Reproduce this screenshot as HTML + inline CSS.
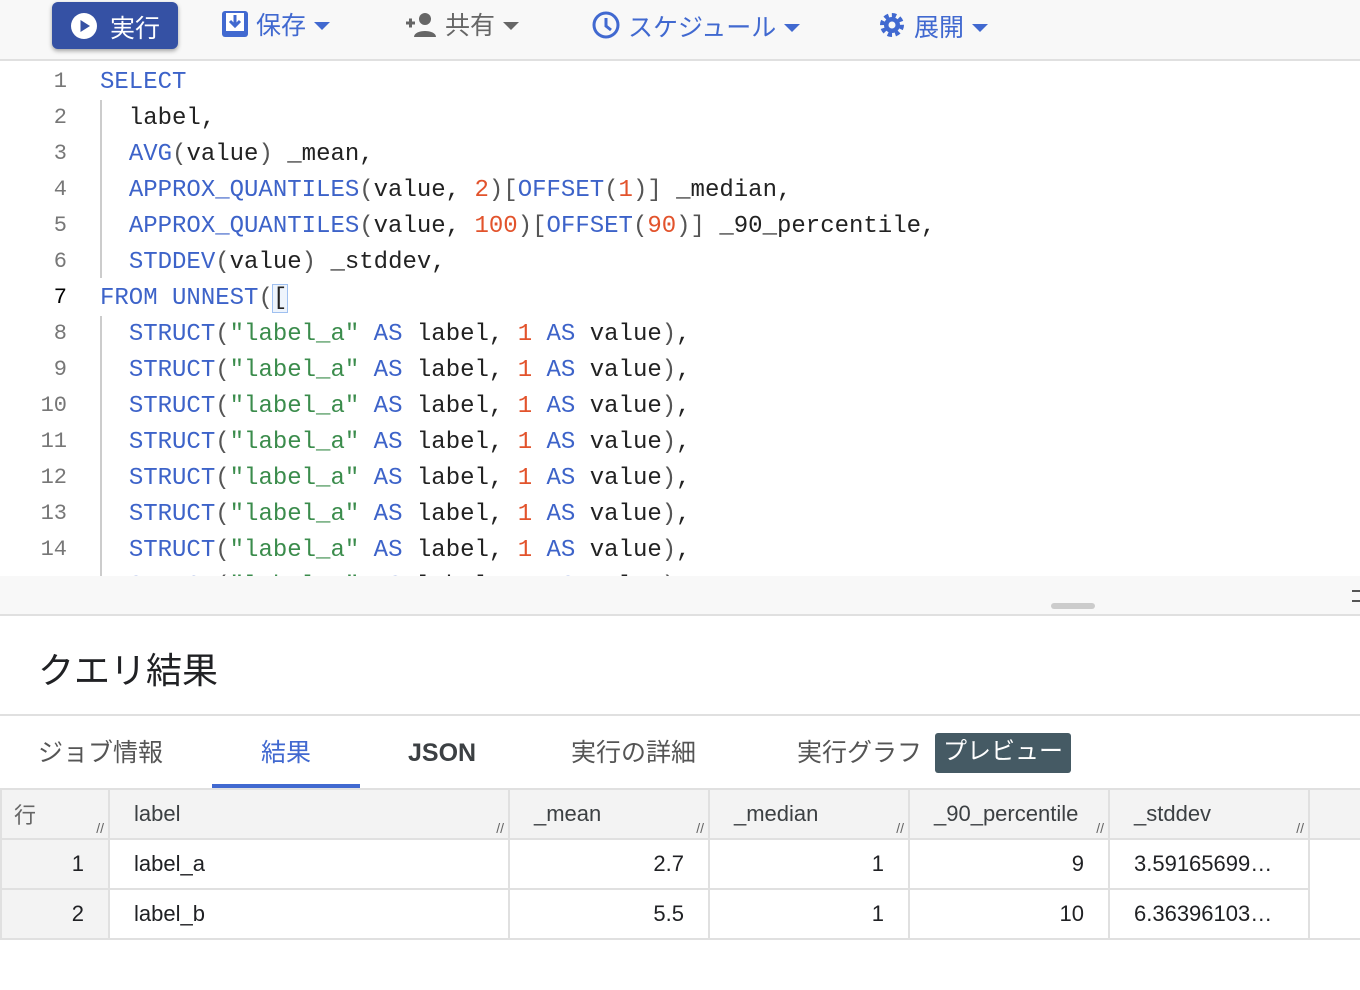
<!DOCTYPE html>
<html><head><meta charset="utf-8"><style>
*{margin:0;padding:0;box-sizing:border-box}
body{width:1360px;height:990px;overflow:hidden;background:#fff;font-family:"Liberation Sans","Noto Sans CJK JP",sans-serif;position:relative}
.tb{position:absolute;left:0;top:0;width:1360px;height:61px;background:#f8f8f8;border-bottom:2px solid #e0e0e0}
.run{position:absolute;left:52px;top:2px;width:126px;height:47px;background:#3551a4;border-radius:6px;box-shadow:0 2px 4px rgba(0,0,0,.35);color:#fff;font-size:25px}
.ti{position:absolute;top:10px;font-size:25px;color:#4169d0;line-height:32px;white-space:nowrap}
.tri{display:inline-block;width:0;height:0;border-left:8px solid transparent;border-right:8px solid transparent;border-top:8px solid currentColor;vertical-align:4px;margin-left:8px}
.ed{position:absolute;left:0;top:62px;width:1360px;height:514px;overflow:hidden;background:#fff}
.ln{position:absolute;left:0;width:67px;text-align:right;font-family:"Liberation Mono",monospace;font-size:22px;color:#777;line-height:36px}
.cd{position:absolute;left:100px;font-family:"Liberation Mono",monospace;font-size:24px;line-height:36px;white-space:pre;color:#222}
.k{color:#3d63c9}.n{color:#e2532c}.s{color:#3b8c4c}.p{color:#555}
.bar{position:absolute;left:0;top:576px;width:1360px;height:40px;background:#f8f8f8;border-bottom:2px solid #e0e0e0}
.title{position:absolute;left:38px;top:642px;font-size:36px;color:#202124}
.tabs{position:absolute;left:0;top:714px;width:1360px;height:76px;border-top:2px solid #e0e0e0;border-bottom:2px solid #e0e0e0}
.tab{position:absolute;top:20px;font-size:25px;color:#555;white-space:nowrap;line-height:34px}
table{position:absolute;left:0;top:788px;border-collapse:collapse;font-size:22px;color:#202124;table-layout:fixed;width:1360px}
td{height:50px;border:2px solid #e0e0e0;padding:0 24px;position:relative;white-space:nowrap;overflow:hidden}
tr.h td{background:#f3f3f3;color:#3c4043;height:50px}
td.r{background:#f3f3f3;text-align:right}
td.num{text-align:right}
.gr{position:absolute;right:4px;bottom:2px;font-size:14px;color:#666}
</style></head><body>
<div class="tb">
 <div class="run"><svg style="position:absolute;left:18px;top:10px" width="28" height="28" viewBox="0 0 28 28"><circle cx="14" cy="14" r="13" fill="#fff"/><path d="M10.5 8 L20 14 L10.5 20Z" fill="#3551a4"/></svg><span style="position:absolute;left:58px;top:7px">実行</span></div>
 <div class="ti" style="left:221px"><svg style="vertical-align:-4px" width="28" height="28" viewBox="0 0 28 28"><rect x="1" y="1" width="26" height="26" rx="3" fill="#4169d0"/><rect x="5" y="3" width="18" height="18" fill="#fff"/><path d="M14 5v10M9 11l5 5 5-5" stroke="#4169d0" stroke-width="3" fill="none"/></svg> 保存<span class="tri"></span></div>
 <div class="ti" style="left:404px;color:#666"><svg style="vertical-align:-4px" width="34" height="28" viewBox="0 0 34 28"><path d="M2 13h9M6.5 8.5v9" stroke="#666" stroke-width="3"/><circle cx="21" cy="9" r="6" fill="#666"/><path d="M10 27c0-8 22-8 22 0z" fill="#666"/></svg> 共有<span class="tri"></span></div>
 <div class="ti" style="left:591px"><svg style="vertical-align:-4px" width="30" height="30" viewBox="0 0 30 30"><circle cx="15" cy="15" r="12" stroke="#4169d0" stroke-width="3" fill="none"/><path d="M15 8v8l5 4" stroke="#4169d0" stroke-width="3" fill="none"/></svg> スケジュール<span class="tri"></span></div>
 <div class="ti" style="left:877px"><svg style="vertical-align:-4px" width="30" height="30" viewBox="0 0 30 30"><circle cx="15" cy="15" r="9" fill="none" stroke="#4169d0" stroke-width="6" stroke-dasharray="4 3"/><circle cx="15" cy="15" r="8" fill="#4169d0"/><circle cx="15" cy="15" r="3.5" fill="#f8f8f8"/></svg> 展開<span class="tri"></span></div>
</div>
<div class="ed">
 <div style="position:absolute;left:100px;top:38px;width:2px;height:178px;background:#ccc"></div>
 <div style="position:absolute;left:100px;top:254px;width:2px;height:270px;background:#ccc"></div>
 <div class="ln" style="top:2px">1<br>2<br>3<br>4<br>5<br>6<br><span style="color:#000">7</span><br>8<br>9<br>10<br>11<br>12<br>13<br>14<br>15</div>
 <div class="cd" style="top:3px"><span class="k">SELECT</span>
  label,
  <span class="k">AVG</span><span class="p">(</span>value<span class="p">)</span> _mean,
  <span class="k">APPROX_QUANTILES</span><span class="p">(</span>value, <span class="n">2</span><span class="p">)[</span><span class="k">OFFSET</span><span class="p">(</span><span class="n">1</span><span class="p">)]</span> _median,
  <span class="k">APPROX_QUANTILES</span><span class="p">(</span>value, <span class="n">100</span><span class="p">)[</span><span class="k">OFFSET</span><span class="p">(</span><span class="n">90</span><span class="p">)]</span> _90_percentile,
  <span class="k">STDDEV</span><span class="p">(</span>value<span class="p">)</span> _stddev,
<span class="k">FROM UNNEST</span><span class="p">(</span><span style="outline:1px solid #9fc0f0;background:#eef4fc">[</span>
  <span class="k">STRUCT</span><span class="p">(</span><span class="s">"label_a"</span> <span class="k">AS</span> label, <span class="n">1</span> <span class="k">AS</span> value<span class="p">)</span>,
  <span class="k">STRUCT</span><span class="p">(</span><span class="s">"label_a"</span> <span class="k">AS</span> label, <span class="n">1</span> <span class="k">AS</span> value<span class="p">)</span>,
  <span class="k">STRUCT</span><span class="p">(</span><span class="s">"label_a"</span> <span class="k">AS</span> label, <span class="n">1</span> <span class="k">AS</span> value<span class="p">)</span>,
  <span class="k">STRUCT</span><span class="p">(</span><span class="s">"label_a"</span> <span class="k">AS</span> label, <span class="n">1</span> <span class="k">AS</span> value<span class="p">)</span>,
  <span class="k">STRUCT</span><span class="p">(</span><span class="s">"label_a"</span> <span class="k">AS</span> label, <span class="n">1</span> <span class="k">AS</span> value<span class="p">)</span>,
  <span class="k">STRUCT</span><span class="p">(</span><span class="s">"label_a"</span> <span class="k">AS</span> label, <span class="n">1</span> <span class="k">AS</span> value<span class="p">)</span>,
  <span class="k">STRUCT</span><span class="p">(</span><span class="s">"label_a"</span> <span class="k">AS</span> label, <span class="n">1</span> <span class="k">AS</span> value<span class="p">)</span>,
  <span class="k">STRUCT</span><span class="p">(</span><span class="s">"label_a"</span> <span class="k">AS</span> label, <span class="n">1</span> <span class="k">AS</span> value<span class="p">)</span>,</div>
</div>
<div class="bar"><div style="position:absolute;left:1051px;top:27px;width:44px;height:6px;border-radius:3px;background:#ccc"></div><div style="position:absolute;left:1352px;top:14px;width:8px;height:2px;background:#555"></div><div style="position:absolute;left:1352px;top:24px;width:8px;height:2px;background:#555"></div></div>
<div class="title">クエリ結果</div>
<div class="tabs">
 <div class="tab" style="left:38px">ジョブ情報</div>
 <div class="tab" style="left:261px;color:#4169d0">結果</div>
 <div class="tab" style="left:408px;color:#3c4043;font-weight:bold">JSON</div>
 <div class="tab" style="left:571px">実行の詳細</div>
 <div class="tab" style="left:797px">実行グラフ</div>
 <div style="position:absolute;left:935px;top:17px;width:136px;height:40px;background:#455a64;border-radius:3px;color:#fff;font-size:24px;text-align:center;line-height:38px">プレビュー</div>
 <div style="position:absolute;left:212px;top:68px;width:148px;height:4px;background:#4169d0"></div>
</div>
<table>
<colgroup><col style="width:108px"><col style="width:400px"><col style="width:200px"><col style="width:200px"><col style="width:200px"><col style="width:200px"><col style="width:52px"></colgroup>
<tr class="h"><td style="padding-left:12px;color:#666">行<span class="gr">//</span></td><td>label<span class="gr">//</span></td><td>_mean<span class="gr">//</span></td><td>_median<span class="gr">//</span></td><td>_90_percentile<span class="gr">//</span></td><td>_stddev<span class="gr">//</span></td><td style="border-right:none"></td></tr>
<tr><td class="r">1</td><td>label_a</td><td class="num">2.7</td><td class="num">1</td><td class="num">9</td><td>3.59165699…</td><td style="border-right:none;border-bottom-color:#fff"></td></tr>
<tr><td class="r">2</td><td>label_b</td><td class="num">5.5</td><td class="num">1</td><td class="num">10</td><td>6.36396103…</td><td style="border-right:none"></td></tr>
</table>
</body></html>
